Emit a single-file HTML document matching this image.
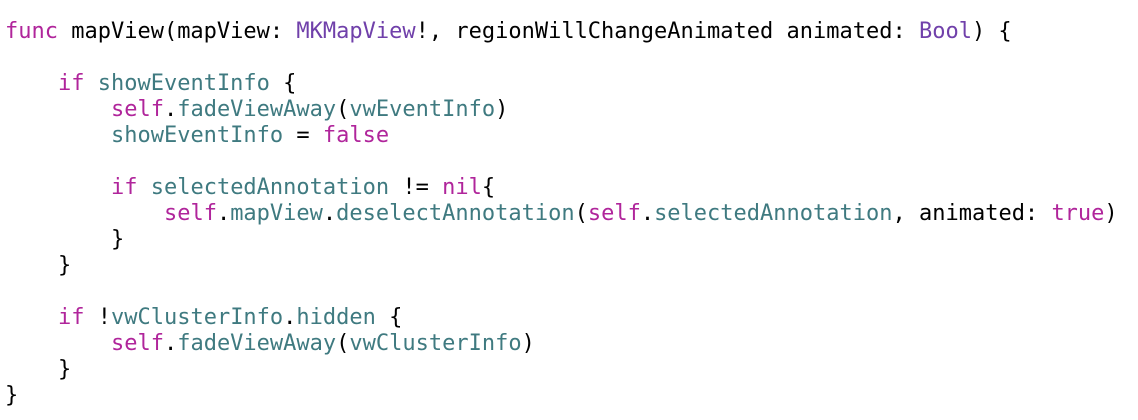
<!DOCTYPE html>
<html><head><meta charset="utf-8"><style>
html,body{margin:0;padding:0;background:#fff;width:1138px;height:420px;overflow:hidden}
pre{margin:0;padding:19px 0 0 5px;font-family:"DejaVu Sans Mono","Liberation Mono",monospace;font-size:22px;line-height:26px;color:#000}
.k{color:#b0259b}.t{color:#7040aa}.v{color:#3f7a80}
</style></head><body><pre><span class="k">func</span> mapView(mapView: <span class="t">MKMapView</span>!, regionWillChangeAnimated animated: <span class="t">Bool</span>) {

    <span class="k">if</span> <span class="v">showEventInfo</span> {
        <span class="k">self</span>.<span class="v">fadeViewAway</span>(<span class="v">vwEventInfo</span>)
        <span class="v">showEventInfo</span> = <span class="k">false</span>

        <span class="k">if</span> <span class="v">selectedAnnotation</span> != <span class="k">nil</span>{
            <span class="k">self</span>.<span class="v">mapView</span>.<span class="v">deselectAnnotation</span>(<span class="k">self</span>.<span class="v">selectedAnnotation</span>, animated: <span class="k">true</span>)
        }
    }

    <span class="k">if</span> !<span class="v">vwClusterInfo</span>.<span class="v">hidden</span> {
        <span class="k">self</span>.<span class="v">fadeViewAway</span>(<span class="v">vwClusterInfo</span>)
    }
}</pre></body></html>
